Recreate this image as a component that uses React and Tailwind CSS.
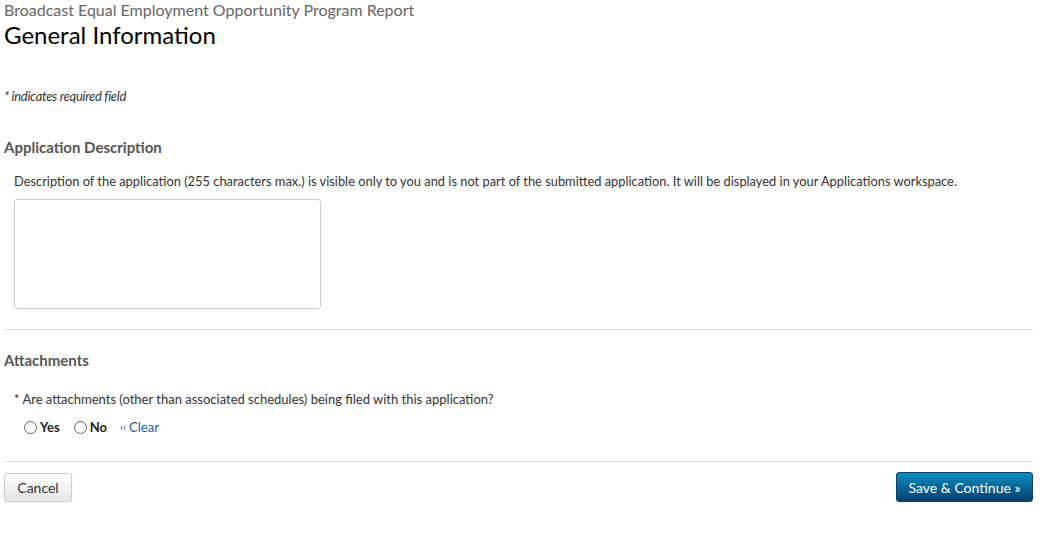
export default function App() {
    return (
        <div className="w-[1029px] ml-1 font-['Lato','Open_Sans',sans-serif] text-[#333]">
            <div className="pt-px text-[16px] leading-[18px] text-[#666]">
                Broadcast Equal Employment Opportunity Program Report
            </div>
            <h1 className="mt-[2px] text-[24px] leading-[28px] text-black">General Information</h1>

            <p className="mt-[39px] text-[13px] leading-[16px] italic tracking-[-0.3px] text-[#333]">
                * indicates required field
            </p>

            <h2 className="mt-[33px] text-[15px] leading-[20px] font-bold text-[#555]">
                Application Description
            </h2>
            <div className="pl-[10px]">
                <p className="mt-[15px] text-[12.85px] leading-[18px]">
                    Description of the application (255 characters max.) is visible only to you and is
                    not part of the submitted application. It will be displayed in your Applications
                    workspace.
                </p>
                <textarea className="mt-[9px] block h-[110px] w-[307px] resize-none rounded-[3px] border border-[#ccc] bg-white" />
            </div>

            <hr className="mt-[20px] border-t border-[#ddd]" />

            <h2 className="mt-[20px] text-[15px] leading-[20px] font-bold text-[#555]">
                Attachments
            </h2>
            <div className="pl-[10px]">
                <p className="mt-[20px] text-[13px] leading-[18px]">
                    * Are attachments (other than associated schedules) being filed with this application?
                </p>
                <div className="mt-[10px] flex items-center pl-[10px] text-[13px] leading-[18px]">
                    <label className="flex items-center gap-[3px] font-bold text-[#222]">
                        <span className="inline-block h-[13px] w-[13px] rounded-full border border-[#666] bg-white" />
                        Yes
                    </label>
                    <label className="ml-[14px] flex items-center gap-[3px] font-bold text-[#222]">
                        <span className="inline-block h-[13px] w-[13px] rounded-full border border-[#666] bg-white" />
                        No
                    </label>
                    <a className="ml-[13px] flex items-center gap-[3px] text-[#1a5f99]">
                        <span className="text-[11px]">‹‹</span>
                        Clear
                    </a>
                </div>
            </div>

            <hr className="mt-[25px] border-t border-[#ddd]" />

            <div className="mt-[10px] flex items-center justify-between">
                <button className="mt-px h-[29px] w-[68px] rounded-[3px] border border-[#ccc] bg-gradient-to-b from-white to-[#e6e6e6] text-[14px] text-[#333] shadow-[0_1px_1px_rgba(0,0,0,0.15)]">
                    Cancel
                </button>
                <button className="h-[30px] w-[137px] rounded-[3px] border border-[#0a3f66] bg-gradient-to-b from-[#0a8ec2] to-[#06406f] text-[14px] text-white">
                    Save &amp; Continue »
                </button>
            </div>
        </div>
    );
}
